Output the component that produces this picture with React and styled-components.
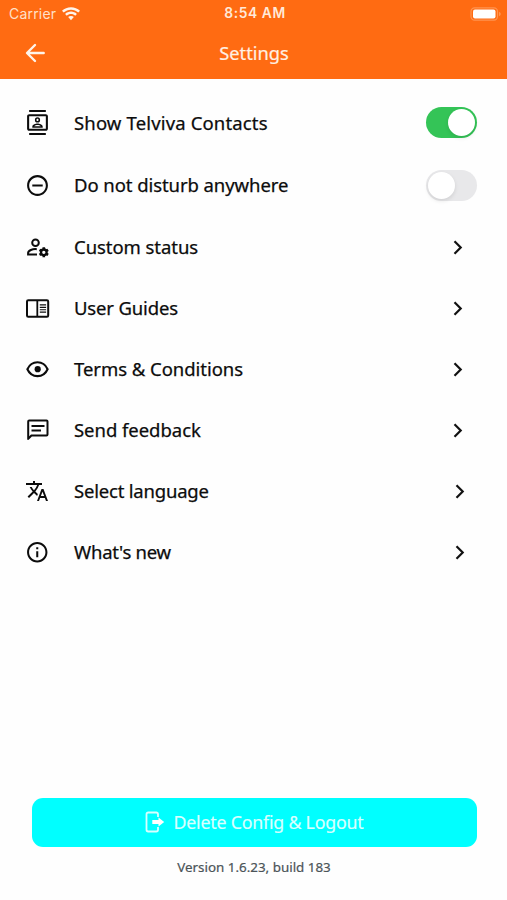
import React from "react";
import styled, { createGlobalStyle } from "styled-components";
import {
  MdOutlineContacts,
  MdOutlineRemoveCircleOutline,
  MdTranslate,
  MdOutlineInfo,
} from "react-icons/md";

const GlobalStyle = createGlobalStyle`
  *, *::before, *::after { box-sizing: border-box; }
  body { margin: 0; background: #fefefe; }
`;

const Screen = styled.div`
  display: flex;
  flex-direction: column;
  width: 507px;
  height: 900px;
  background: #fefefe;
  color: #0c0c0c;
  font-family: "Noto Sans", "Open Sans", sans-serif;
  overflow: hidden;
`;

const Header = styled.header`
  height: 79px;
  flex: none;
  background: #ff6b12;
  color: #fff0e2;
`;

const StatusBar = styled.div`
  display: grid;
  grid-template-columns: 1fr auto 1fr;
  align-items: center;
  height: 27px;
  padding: 0 6px 0 9px;
  font-family: Inter, "Liberation Sans", sans-serif;
  font-size: 14px;
  line-height: 27px;
`;

const Carrier = styled.div`
  display: flex;
  align-items: center;
  gap: 6px;
  letter-spacing: 0.2px;
  color: #ffe0c8;
`;

const Clock = styled.div`
  font-weight: 600;
  font-size: 13.8px;
  letter-spacing: 0.6px;
  color: #ffe9d8;
`;

const BatterySlot = styled.div`
  display: flex;
  justify-content: flex-end;
`;

const TitleBar = styled.div`
  display: grid;
  grid-template-columns: 1fr auto 1fr;
  align-items: center;
  height: 52px;
  padding: 0 23.5px 0 24.5px;
`;

const BackButton = styled.button`
  display: flex;
  width: 22px;
  padding: 0;
  border: 0;
  background: none;
  color: #fff4ea;
`;

const Title = styled.h1`
  margin: 0;
  font-size: 18.3px;
  font-weight: 400;
  line-height: 24px;
  -webkit-text-stroke: 0.2px currentColor;
`;

const List = styled.main`
  display: flex;
  flex-direction: column;
  flex: 1;
  padding-top: 12.5px;
`;

const Row = styled.div`
  display: flex;
  align-items: center;
  flex: none;
  height: ${(p) => (p.$tall ? 62.5 : 61)}px;
  padding: 0 ${(p) => p.$end}px 0 25px;
`;

const IconSlot = styled.span`
  display: flex;
  width: 25px;
  margin-right: 24px;
`;

const Label = styled.span`
  flex: 1;
  font-size: 18.5px;
  line-height: 26px;
  letter-spacing: ${(p) => p.$tracking}px;
  white-space: nowrap;
  -webkit-text-stroke: 0.25px currentColor;
`;

const Toggle = styled.button`
  display: flex;
  align-items: center;
  justify-content: ${(p) => (p.$on ? "flex-end" : "flex-start")};
  width: 50.5px;
  height: 31px;
  padding: 0 2px;
  border: 0;
  border-radius: 16px;
  background: ${(p) => (p.$on ? "#34c457" : "#e8e8ea")};
`;

const Knob = styled.span`
  width: 27px;
  height: 27px;
  border-radius: 50%;
  background: #fff;
  box-shadow: 0 2px 4px rgba(0, 0, 0, 0.1);
`;

const Footer = styled.footer`
  display: flex;
  flex-direction: column;
  align-items: center;
  height: 102px;
  padding: 0 30.5px 0 31.5px;
`;

const LogoutButton = styled.button`
  display: flex;
  align-items: center;
  justify-content: center;
  gap: 9px;
  width: 445px;
  height: 48.5px;
  padding: 0;
  border: 0;
  border-radius: 11px;
  background: #00ffff;
  color: #d9ffff;
  font-family: inherit;
  font-size: 17.8px;
  line-height: 24px;
  letter-spacing: -0.22px;
  -webkit-text-stroke: 0.2px currentColor;
`;

const Version = styled.div`
  margin-top: 10px;
  font-size: 13.4px;
  line-height: 20px;
  color: #4b5458;
  -webkit-text-stroke: 0.2px currentColor;
`;

function Wifi() {
  return (
    <svg width="18" height="14" viewBox="0 0 18 14" fill="#fff4ea">
      <path d="M9 0.3C5.5 0.3 2.4 1.6 0 3.8l1.7 1.8C3.7 3.8 6.2 2.7 9 2.7s5.3 1.1 7.3 2.9L18 3.8C15.6 1.6 12.5 0.3 9 0.3z" />
      <path d="M9 4.6c-2.3 0-4.3.9-5.9 2.3l1.7 1.8C5.9 7.7 7.4 7 9 7s3.1.7 4.2 1.7l1.7-1.8C13.3 5.5 11.3 4.6 9 4.6z" />
      <path d="M9 8.9c-1.1 0-2.1.4-2.8 1.1L9 13.2l2.8-3.2C11.1 9.3 10.1 8.9 9 8.9z" />
    </svg>
  );
}

function Battery() {
  return (
    <svg width="31" height="14" viewBox="0 0 31 14">
      <rect x="1" y="0.8" width="26.5" height="12.4" rx="3.6" fill="none" stroke="#ff9450" strokeWidth="1.2" />
      <rect x="3" y="2.5" width="22.5" height="9" rx="2" fill="#fff" />
      <path d="M29 4.8c1.2.5 1.7 1.3 1.7 2.2s-.5 1.7-1.7 2.2z" fill="#ff9450" />
    </svg>
  );
}

function BackArrow() {
  return (
    <svg width="22" height="22" viewBox="0 0 22 22" fill="none" stroke="currentColor" strokeWidth="2.4" strokeLinecap="round" strokeLinejoin="round">
      <path d="M18.7 11H2.7M10 3L2 11l8 8" />
    </svg>
  );
}

function Chevron() {
  return (
    <svg width="10" height="15" viewBox="0 0 10 15" fill="none" stroke="#111" strokeWidth="2.2">
      <path d="M1.5 1.3L7.7 7.5L1.5 13.7" />
    </svg>
  );
}

function UserGear() {
  return (
    <svg width="25" height="25" viewBox="0 0 25 25" fill="none" stroke="currentColor" strokeWidth="2">
      <circle cx="10.5" cy="7.7" r="3.3" />
      <path d="M11.8 14.2c-4.2-.5-8.7 1.3-8.7 3.8v1.5h8.900" />
      <circle cx="18.800" cy="17.300" r="2.800" strokeWidth="2.300" />
      <path d="M18.8 12.3v2.3M18.8 20v2.3M14.5 14.8l2 1.15M21.1 18.65l2 1.15M14.5 19.8l2-1.15M21.1 15.95l2-1.15" strokeWidth="2.6" />
    </svg>
  );
}

function Reader() {
  return (
    <svg width="25" height="25" viewBox="0 0 25 25" fill="none" stroke="currentColor">
      <rect x="2" y="4.3" width="21.2" height="16.4" rx="1.3" strokeWidth="2" />
      <path d="M12.3 4v17" strokeWidth="1.8" />
      <path d="M14.8 8.9h6.3M14.8 11.3h6.3M14.8 13.7h6.3M14.8 16.1h6.3" strokeWidth="1.15" />
    </svg>
  );
}

function Eye() {
  return (
    <svg width="25" height="25" viewBox="0 0 25 25">
      <path d="M2.4 12.200C4.300 8 8.100 5.300 12.500 5.300s8.200 2.700 10.100 6.900c-1.900 4.200-5.700 6.900-10.100 6.900s-8.200-2.700-10.100-6.900z" fill="none" stroke="currentColor" strokeWidth="2.100" />
      <circle cx="12.700" cy="12.200" r="3.100" fill="currentColor" />
    </svg>
  );
}

function Feedback() {
  return (
    <svg width="25" height="25" viewBox="0 0 25 25" fill="none" stroke="currentColor" strokeWidth="2">
      <path d="M3.2 20.9V3.5c0-.6.4-1 1-1h17.3c.6 0 1 .4 1 1v13c0 .6-.4 1-1 1H6.4z" strokeLinejoin="round" />
      <path d="M6.5 8h13M6.5 12.5h9.5" strokeWidth="1.8" />
    </svg>
  );
}

function Logout() {
  return (
    <svg width="20" height="22" viewBox="0 0 20 22">
      <path d="M13 6V3.2c0-1-.7-1.7-1.7-1.7H3.2c-1 0-1.7.7-1.7 1.7v15.6c0 1 .7 1.7 1.7 1.7h8.1c1 0 1.7-.7 1.7-1.7V16" fill="none" stroke="#d9ffff" strokeWidth="1.8" />
      <path d="M7.300 9.100h6.200V6.500l5.700 4.500-5.700 4.500v-2.600H7.300z" fill="#fff" />
    </svg>
  );
}

const rows = [
  { label: "Show Telviva Contacts", icon: <MdOutlineContacts size={25} />, tracking: 0.15, toggle: true, on: true },
  { label: "Do not disturb anywhere", icon: <MdOutlineRemoveCircleOutline size={25} />, tracking: -0.07, toggle: true, on: false },
  { label: "Custom status", icon: <UserGear />, tracking: -0.06, end: 44 },
  { label: "User Guides", icon: <Reader />, tracking: -0.16, end: 44 },
  { label: "Terms & Conditions", icon: <Eye />, tracking: -0.04, end: 44 },
  { label: "Send feedback", icon: <Feedback />, tracking: -0.04, end: 44 },
  { label: "Select language", icon: <MdTranslate size={24} />, tracking: -0.2, end: 42 },
  { label: "What's new", icon: <MdOutlineInfo size={24.5} />, tracking: -0.25, end: 42 },
];

export default function App() {
  return (
    <>
      <GlobalStyle />
      <Screen>
        <Header>
          <StatusBar>
            <Carrier>
              Carrier
              <Wifi />
            </Carrier>
            <Clock>8:54 AM</Clock>
            <BatterySlot>
              <Battery />
            </BatterySlot>
          </StatusBar>
          <TitleBar>
            <BackButton aria-label="Back">
              <BackArrow />
            </BackButton>
            <Title>Settings</Title>
          </TitleBar>
        </Header>
        <List>
          {rows.map((row) => (
            <Row key={row.label} $tall={row.toggle} $end={row.toggle ? 30.5 : row.end}>
              <IconSlot>{row.icon}</IconSlot>
              <Label $tracking={row.tracking}>{row.label}</Label>
              {row.toggle ? (
                <Toggle $on={row.on} role="switch" aria-checked={row.on} aria-label={row.label}>
                  <Knob />
                </Toggle>
              ) : (
                <Chevron />
              )}
            </Row>
          ))}
        </List>
        <Footer>
          <LogoutButton>
            <Logout />
            Delete Config &amp; Logout
          </LogoutButton>
          <Version>Version 1.6.23, build 183</Version>
        </Footer>
      </Screen>
    </>
  );
}
